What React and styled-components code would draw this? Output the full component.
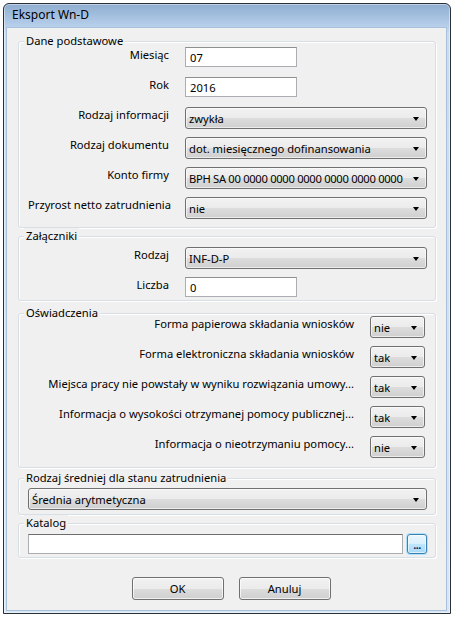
import React from 'react';
import styled, { createGlobalStyle } from 'styled-components';

const GlobalStyle = createGlobalStyle`
  html, body {
    margin: 0;
    padding: 0;
    background: #ffffff;
  }
  body {
    font-family: "Noto Sans", "Open Sans", sans-serif;
    font-size: 11.2px;
    color: #000;
  }
`;

function Combo({ value, width, tight }) {
    return (
        <ComboBox $width={width} $tight={tight}>
            <span>{value}</span>
            <Arrow />
        </ComboBox>
    );
}

function Row({ label, children }) {
    return (
        <>
            <Label>{label}</Label>
            <Cell>{children}</Cell>
        </>
    );
}

const statements = [
    ['Forma papierowa składania wniosków', 'nie'],
    ['Forma elektroniczna składania wniosków', 'tak'],
    ['Miejsca pracy nie powstały w wyniku rozwiązania umowy...', 'tak'],
    ['Informacja o wysokości otrzymanej pomocy publicznej...', 'tak'],
    ['Informacja o nieotrzymaniu pomocy...', 'nie'],
];

export default function App() {
    return (
        <>
            <GlobalStyle />
            <Window>
                <TitleBar>Eksport Wn-D</TitleBar>
                <Body>
                    <Group $mt={0} $pt={5} $pb={8}>
                        <GroupTitle>Dane podstawowe</GroupTitle>
                        <Form $labelWidth={141} $rows={6}>
                            <Row label="Miesiąc"><TextBox defaultValue="07" readOnly /></Row>
                            <Row label="Rok"><TextBox defaultValue="2016" readOnly /></Row>
                            <Row label="Rodzaj informacji"><Combo value="zwykła" /></Row>
                            <Row label="Rodzaj dokumentu"><Combo value="dot. miesięcznego dofinansowania" /></Row>
                            <Row label="Konto firmy"><Combo value="BPH SA 00 0000 0000 0000 0000 0000 0000" tight /></Row>
                            <Row label="Przyrost netto zatrudnienia"><Combo value="nie" /></Row>
                        </Form>
                    </Group>

                    <Group $mt={8} $pt={10} $pb={3}>
                        <GroupTitle>Załączniki</GroupTitle>
                        <Form $labelWidth={141} $rows={2}>
                            <Row label="Rodzaj"><Combo value="INF-D-P" /></Row>
                            <Row label="Liczba"><TextBox defaultValue="0" readOnly /></Row>
                        </Form>
                    </Group>

                    <Group $mt={12} $pt={2} $pb={9}>
                        <GroupTitle>Oświadczenia</GroupTitle>
                        <Form $labelWidth={326} $rows={statements.length}>
                            {statements.map(([label, value]) => (
                                <Row key={label} label={label}><Combo value={value} width={55} /></Row>
                            ))}
                        </Form>
                    </Group>

                    <Group $mt={10} $pt={9} $pb={4}>
                        <GroupTitle>Rodzaj średniej dla stanu zatrudnienia</GroupTitle>
                        <Combo value="Średnia arytmetyczna" />
                    </Group>

                    <Group $mt={8} $pt={10} $pb={3}>
                        <GroupTitle>Katalog</GroupTitle>
                        <PathRow>
                            <PathBox readOnly />
                            <BrowseButton>...</BrowseButton>
                        </PathRow>
                    </Group>

                    <Buttons>
                        <Button>OK</Button>
                        <Button>Anuluj</Button>
                    </Buttons>
                </Body>
            </Window>
        </>
    );
}

const Window = styled.div`
margin: 3px 0 0 3px;
width: 448px;
height: 611px;
box-sizing: border-box;
border: 1px solid #2b2f36;
border-radius: 6px 6px 0 0;
background: linear-gradient(to bottom, #8fadd1 0px, #b6cfea 22px, #c9dcf0 30px, #d6e6f5 100%);
padding: 0 3px 2px 2px;
display: flex;
flex-direction: column;
box-shadow: inset 0 0 0 1px rgba(255,255,255,0.45);
`

const TitleBar = styled.div`
height: 23px;
line-height: 22px;
padding-left: 6px;
font-size: 12px;
color: #000;
`

const Body = styled.div`
flex: 1;
background: #f0f0f0;
border: 1px solid #a9c0da;
padding: 13px 10px 0 11px;
display: flex;
flex-direction: column;
`

const Group = styled.div`
position: relative;
margin-top: ${p => p.$mt}px;
padding: ${p => p.$pt}px 8px ${p => p.$pb}px 9px;
border: 1px solid #d5dfe5;
border-radius: 3px;
box-shadow: inset 1px 1px 0 #ffffff, 1px 1px 0 #ffffff;
`

const GroupTitle = styled.span`
position: absolute;
top: -9px;
left: 5px;
padding: 0 2px;
line-height: 16px;
background: #f0f0f0;
`

const Form = styled.div`
display: grid;
grid-template-columns: ${p => p.$labelWidth}px minmax(0, 1fr);
grid-template-rows: repeat(${p => p.$rows - 1}, 30px) auto;
column-gap: 16px;
`

const Label = styled.div`
text-align: right;
white-space: nowrap;
line-height: 16px;
`

const Cell = styled.div`
display: flex;
align-items: flex-start;
min-width: 0;
`

const TextBox = styled.input`
width: 112px;
height: 20px;
box-sizing: border-box;
border: 1px solid #abadb3;
border-top-color: #8e8f8f;
background: #fff;
padding: 0 4px;
font: inherit;
color: #000;
outline: none;
`

const ComboBox = styled.div`
width: ${p => (p.$width ? `${p.$width}px` : '100%')};
height: 22px;
box-sizing: border-box;
border: 1px solid #707070;
border-radius: 3px;
background: linear-gradient(to bottom, #f2f2f2 0%, #ebebeb 50%, #dddddd 50%, #cfcfcf 100%);
box-shadow: inset 0 0 0 1px rgba(255,255,255,0.6);
display: flex;
align-items: center;
justify-content: space-between;
padding: 1px 7px 0 3px;
white-space: nowrap;
overflow: hidden;

span {
    overflow: hidden;
    min-width: 0;
    letter-spacing: ${p => (p.$tight ? '-0.3px' : 'normal')};
}
`

const Arrow = styled.i`
flex: none;
width: 0;
height: 0;
margin-left: 3px;
border-left: 3.5px solid transparent;
border-right: 3.5px solid transparent;
border-top: 4px solid #000;
`

const PathRow = styled.div`
display: flex;
align-items: center;
gap: 4px;
`

const PathBox = styled.input`
flex: 1;
min-width: 0;
height: 20px;
box-sizing: border-box;
border: 1px solid #abadb3;
border-top-color: #6e6e6e;
background: #fff;
outline: none;
font: inherit;
`

const BrowseButton = styled.div`
width: 20px;
height: 20px;
box-sizing: border-box;
border: 1px solid #3c7fb1;
border-radius: 3px;
background: linear-gradient(to bottom, #eaf6fd 0%, #d9f0fc 50%, #bee6fd 50%, #a7d9f5 100%);
box-shadow: 0 0 0 1px #aee3fb, inset 0 0 0 1px rgba(255,255,255,0.6);
font-family: "Liberation Sans", sans-serif;
font-size: 11px;
font-weight: bold;
line-height: 20px;
text-align: center;
letter-spacing: -0.5px;
color: #1a1a60;
`

const Buttons = styled.div`
display: flex;
justify-content: center;
gap: 15px;
margin-top: 19px;
padding-left: 8px;
`

const Button = styled.div`
width: 92px;
height: 23px;
box-sizing: border-box;
border: 1px solid #707070;
border-radius: 3px;
background: linear-gradient(to bottom, #f2f2f2 0%, #ebebeb 50%, #dddddd 50%, #cfcfcf 100%);
box-shadow: inset 0 0 0 1px rgba(255,255,255,0.7);
display: flex;
align-items: center;
justify-content: center;
`
